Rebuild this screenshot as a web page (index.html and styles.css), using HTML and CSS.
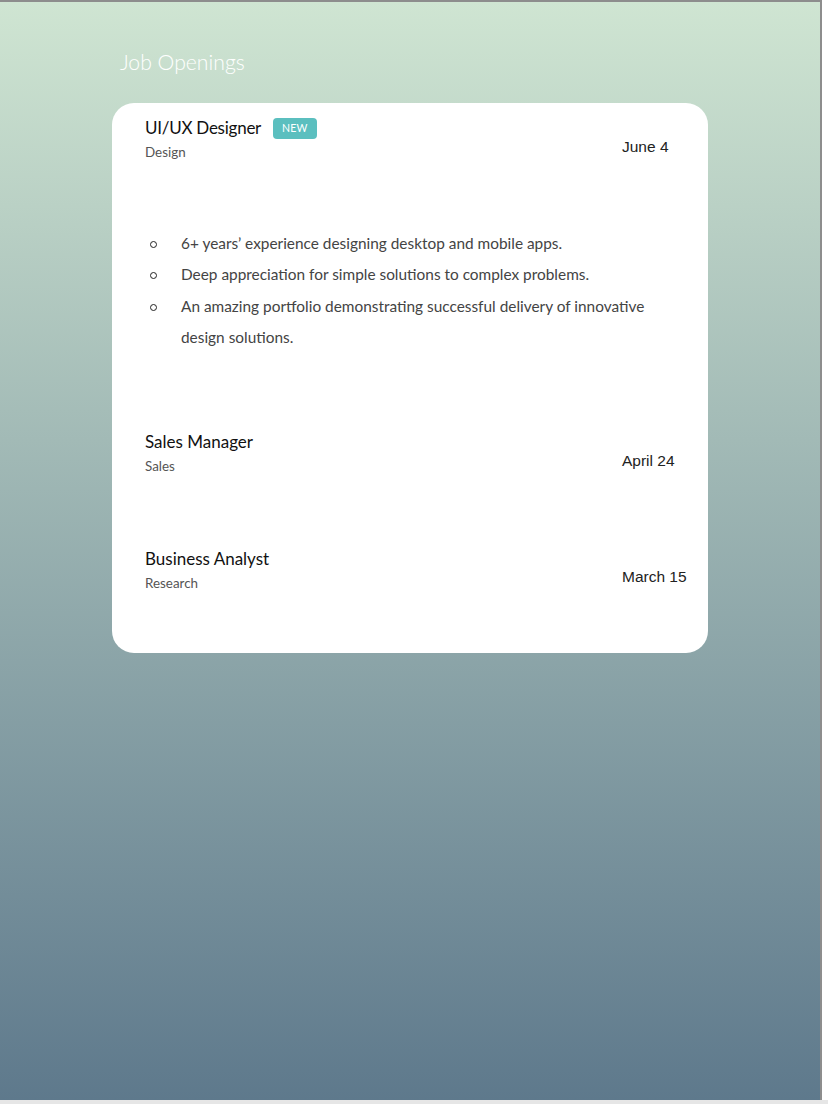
FILE: index.html
```html
<!DOCTYPE html>
<html lang="en">
<head>
<meta charset="utf-8">
<title>Job Openings</title>
<link rel="stylesheet" href="styles.css">
</head>
<body>
<div class="screen">
  <div class="frame">
    <h1 class="page-title">Job Openings</h1>
    <div class="card">
      <div class="job job-first">
        <div class="job-head">
          <div class="job-info">
            <div class="job-title-row">
              <span class="job-title job-title-tight">UI/UX Designer</span>
              <span class="badge">NEW</span>
            </div>
            <div class="job-cat">Design</div>
          </div>
          <div class="job-date">June 4</div>
        </div>
        <ul class="job-points">
          <li>6+ years’ experience designing desktop and mobile apps.</li>
          <li>Deep appreciation for simple solutions to complex problems.</li>
          <li>An amazing portfolio demonstrating successful delivery of innovative design solutions.</li>
        </ul>
      </div>
      <div class="job job-second">
        <div class="job-head">
          <div class="job-info">
            <div class="job-title-row"><span class="job-title">Sales Manager</span></div>
            <div class="job-cat">Sales</div>
          </div>
          <div class="job-date">April 24</div>
        </div>
      </div>
      <div class="job">
        <div class="job-head">
          <div class="job-info">
            <div class="job-title-row"><span class="job-title">Business Analyst</span></div>
            <div class="job-cat">Research</div>
          </div>
          <div class="job-date job-date-last">March 15</div>
        </div>
      </div>
    </div>
  </div>
</div>
</body>
</html>
```

FILE: styles.css
```css
html, body {
  margin: 0;
  padding: 0;
  background: #e6e6e6;
}

.screen {
  height: 1100px;
  background: #ffffff;
}

.frame {
  box-sizing: border-box;
  width: 822px;
  height: 1100px;
  border-top: 2px solid #8d8d8d;
  border-right: 2px solid #8d8d8d;
  background: linear-gradient(to bottom, #cfe5d2 0%, #5e798c 100%);
  padding: 45px 0 0 112px;
  font-family: Lato, "Noto Sans", sans-serif;
}

.page-title {
  margin: 0 0 26px 8px;
  font-family: Lato, "Noto Sans", sans-serif;
  font-weight: 300;
  font-size: 21.2px;
  line-height: 30px;
  color: #ffffff;
}

.card {
  box-sizing: border-box;
  width: 596px;
  background: #ffffff;
  border-radius: 22px;
  padding: 15px 0 62px 33px;
}

.job-head {
  display: grid;
  grid-template-columns: 1fr 86px;
}

.job-title-row {
  display: flex;
  align-items: center;
  gap: 12px;
  height: 20px;
}

.job-title {
  font-size: 17px;
  line-height: 20px;
  color: #111111;
}

.job-title-tight {
  letter-spacing: -0.25px;
}

.badge {
  display: inline-block;
  box-sizing: border-box;
  height: 21px;
  padding: 0 9px;
  border-radius: 4px;
  background: #5bbfbf;
  color: #ffffff;
  font-size: 10.5px;
  line-height: 21px;
  letter-spacing: 0.2px;
}

.job-cat {
  margin-top: 6px;
  font-size: 13.4px;
  line-height: 16px;
  color: #555555;
}

.job-date {
  margin-top: 20px;
  font-family: "Liberation Sans", Arial, sans-serif;
  font-size: 15.5px;
  line-height: 18px;
  color: #222222;
}

.job-date-last {
  margin-top: 19px;
}

.job-points {
  list-style: none;
  margin: 68px 0 0 0;
  padding: 0 0 0 36px;
  max-width: 480px;
}

.job-points li {
  font-size: 15.4px;
  line-height: 31.3px;
  color: #444444;
}

.job-points li::before {
  content: "";
  display: inline-block;
  box-sizing: border-box;
  width: 7px;
  height: 7px;
  margin-left: -31px;
  margin-right: 24px;
  border: 1.5px solid #222222;
  border-radius: 50%;
  vertical-align: 1px;
}

.job-first {
  margin-bottom: 79px;
}

.job-second {
  margin-bottom: 75px;
}
```
